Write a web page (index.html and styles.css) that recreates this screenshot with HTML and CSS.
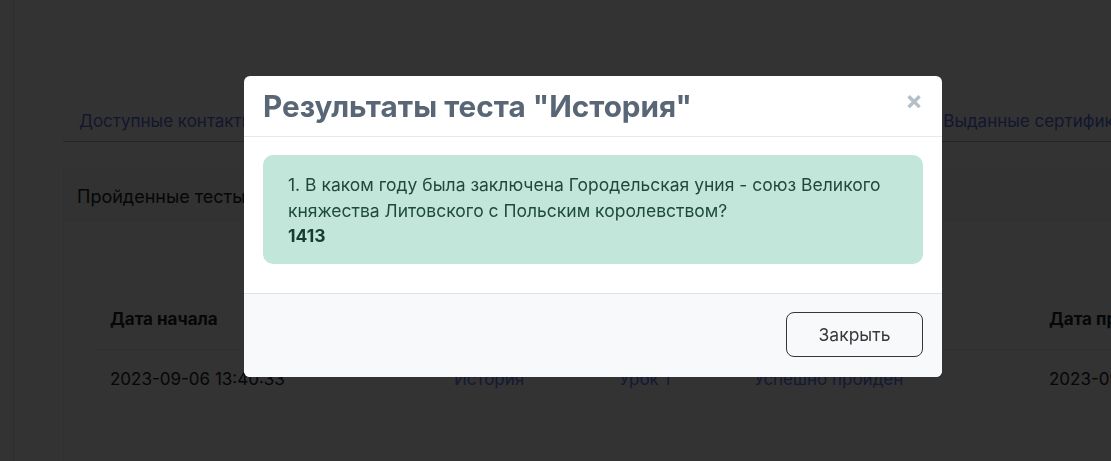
FILE: index.html
```html
<!DOCTYPE html>
<html lang="ru">
<head>
  <meta charset="UTF-8" />
  <meta name="viewport" content="width=device-width, initial-scale=1.0"/>
  <title>Пройденные тесты</title>
  <link rel="stylesheet" href="styles.css">
</head>
<body>

  <div class="layout">
    <div class="content">
      <ul class="tabs">
        <li><a href="#">Доступные контакты</a></li>
        <li class="spacer"></li>
        <li><a href="#">Выданные сертификаты</a></li>
      </ul>

      <div class="card">
        <div class="card-header">Пройденные тесты</div>
        <div class="card-body">
          <table class="results">
            <thead>
              <tr>
                <th class="c-date">Дата начала</th>
                <th class="c-test">Тест</th>
                <th class="c-lesson">Урок</th>
                <th class="c-status">Статус</th>
                <th class="c-end">Дата прохождения</th>
              </tr>
            </thead>
            <tbody>
              <tr>
                <td>2023-09-06 13:40:33</td>
                <td><a href="#">История</a></td>
                <td><a href="#">Урок 1</a></td>
                <td><a href="#">Успешно пройден</a></td>
                <td>2023-09-06 13:42:10</td>
              </tr>
            </tbody>
          </table>
        </div>
      </div>
    </div>
  </div>

  <div class="backdrop">
    <div class="modal">
      <div class="modal-header">
        <h2>Результаты теста "История"</h2>
        <button class="close" aria-label="Закрыть">&times;</button>
      </div>
      <div class="modal-body">
        <div class="answer">
          1. В каком году была заключена Городельская уния - союз Великого
          княжества Литовского с Польским королевством?<br>
          <b>1413</b>
        </div>
      </div>
      <div class="modal-footer">
        <button class="btn">Закрыть</button>
      </div>
    </div>
  </div>

</body>
</html>
```

FILE: styles.css
```css
body {
  font-family: 'Inter', 'Noto Sans', sans-serif;
  background-color: #fff;
  color: #212529;
  margin: 0;
  padding: 0;
  overflow: hidden;
  height: 461px;
}

.layout {
  margin-left: 13px;
  border-left: 1px solid #e4e4e4;
  height: 100%;
  overflow: hidden;
}

.content {
  padding: 102px 0 0 49px;
}

.tabs {
  list-style: none;
  margin: 0;
  padding: 0;
  display: flex;
  border-bottom: 1px solid #bdbdbd;
  font-size: 17px;
  overflow: hidden;
}

.tabs li a {
  display: block;
  padding: 9px 15px 10px 16px;
  color: #5a70e6;
  text-decoration: none;
  white-space: nowrap;
}

.tabs .spacer {
  flex: 1;
}

.tabs li:last-child a {
  margin-right: -48px;
}

.card {
  margin-top: 27px;
  border: 1px solid #f0f0f0;
  border-right: none;
  background: #fff;
  height: 400px;
  overflow: hidden;
}

.card-header {
  background: #f7f7f7;
  padding: 16px 13px 13px 13px;
  font-size: 18px;
  border-bottom: 1px solid #f0f0f0;
}

.card-body {
  padding: 78px 0 0 32px;
}

.results {
  border-collapse: collapse;
  table-layout: fixed;
  width: 1200px;
  font-size: 17px;
  white-space: nowrap;
}

.results th {
  text-align: left;
  font-weight: 700;
  padding: 10px 14px 20px 14px;
  border-bottom: 1px solid #ececec;
}

.results td {
  padding: 19px 14px;
  background: #fcfcfc;
}

.results a {
  color: #6680ff;
  text-decoration: none;
}

.c-date { width: 316px; }
.c-test { width: 137px; }
.c-lesson { width: 107px; }
.c-status { width: 267px; }

.backdrop {
  position: fixed;
  inset: 0;
  background: rgba(0, 0, 0, 0.8);
}

.modal {
  position: absolute;
  left: 244px;
  top: 76px;
  width: 698px;
  background: #fff;
  border-radius: 6px;
  overflow: hidden;
}

.modal-header {
  display: flex;
  align-items: center;
  justify-content: space-between;
  height: 60px;
  padding: 0 19px;
  border-bottom: 1px solid #e6e8eb;
}

.modal-header h2 {
  margin: 0;
  font-size: 29.7px;
  font-weight: 700;
  color: #596676;
}

.close {
  border: none;
  background: none;
  color: #b4bfc8;
  font-size: 26px;
  font-weight: 700;
  line-height: 1;
  padding: 0;
  margin-top: -10px;
  cursor: pointer;
  font-family: inherit;
}

.modal-body {
  padding: 18px 19px 29px 19px;
}

.answer {
  background: #c3e6da;
  color: #1f4a3b;
  border-radius: 10px;
  padding: 17px 25px 15px 25px;
  font-size: 17.5px;
  line-height: 25.5px;
}

.answer b {
  font-weight: 700;
  color: #183c30;
}

.modal-footer {
  background: #f7f9fa;
  border-top: 1px solid #dfe3e6;
  display: flex;
  justify-content: flex-end;
  padding: 18px 19px 20px 19px;
}

.btn {
  width: 137px;
  height: 45px;
  border: 1px solid #33363a;
  border-radius: 8px;
  background: transparent;
  font-family: inherit;
  font-size: 17.5px;
  color: #363a3e;
  cursor: pointer;
}
```
